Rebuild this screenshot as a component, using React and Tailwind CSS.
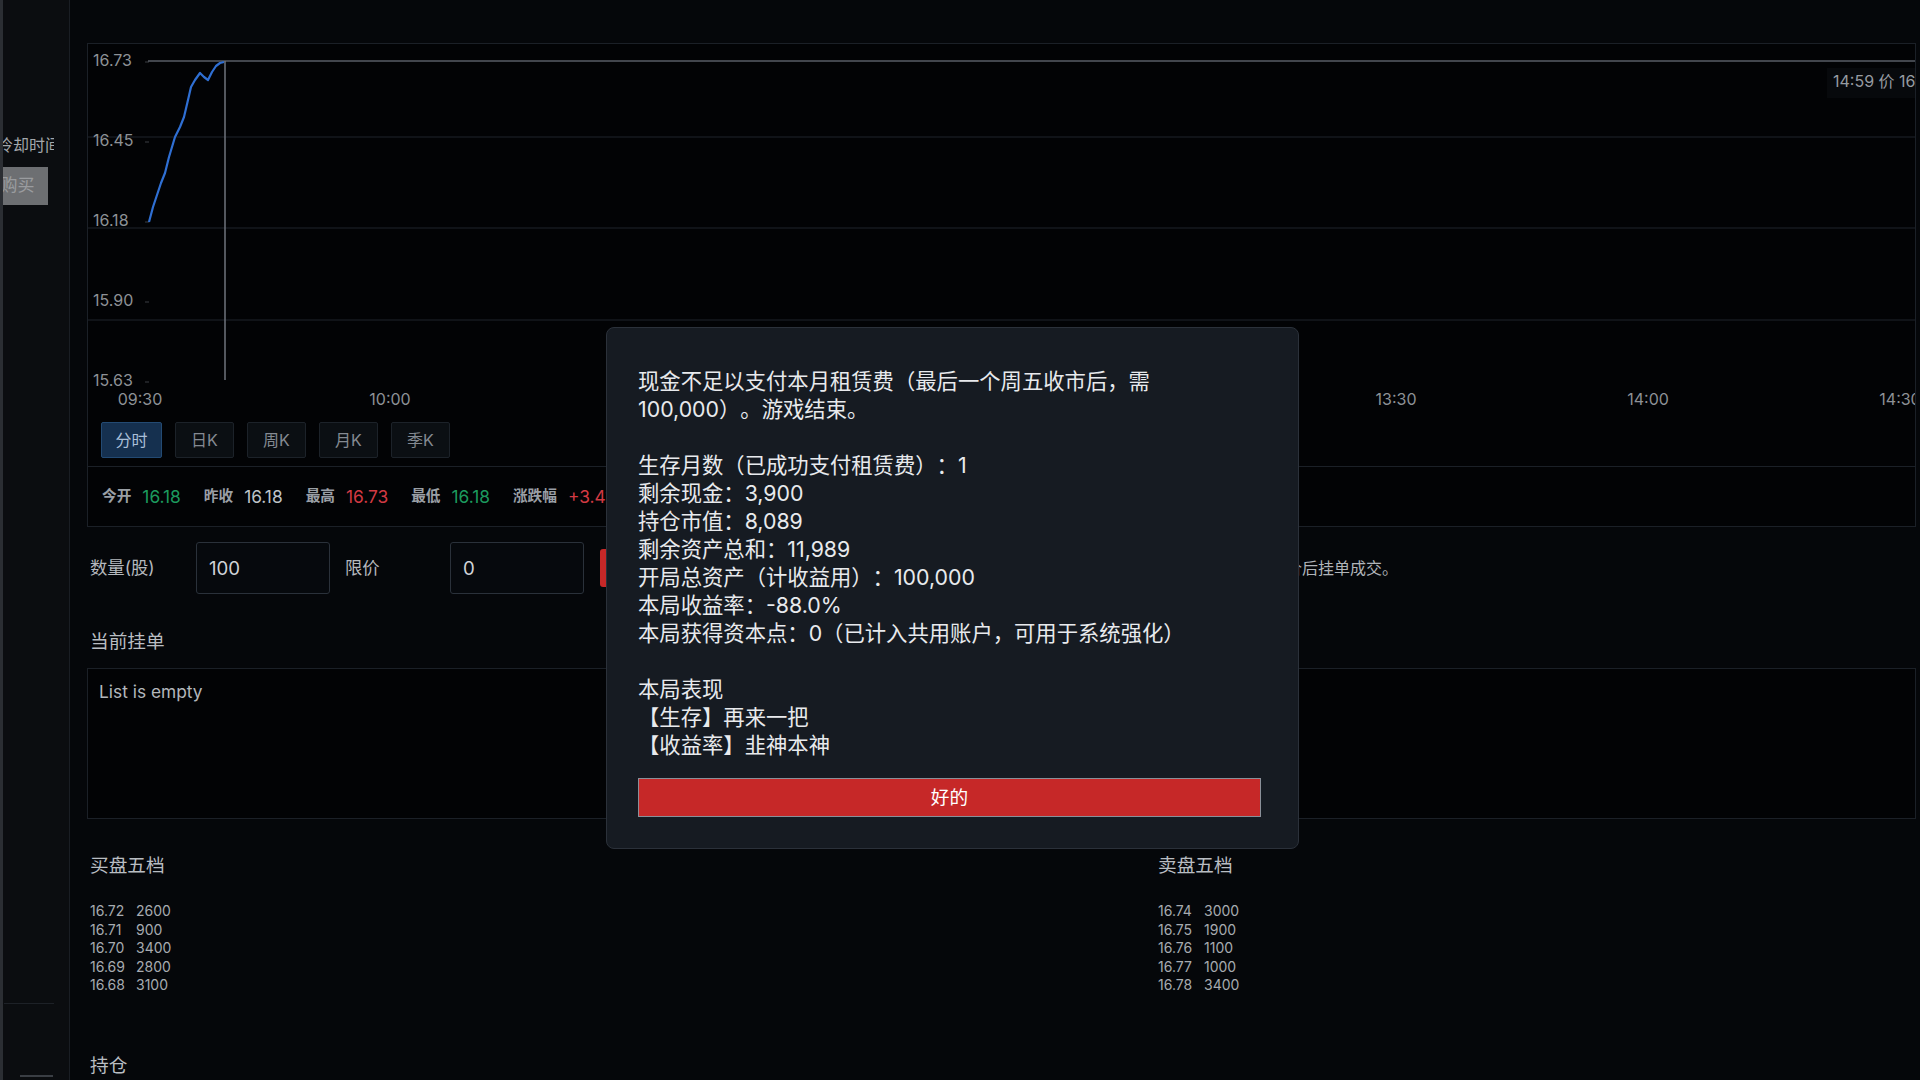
import React from "react";

const font = "font-['Inter','Noto_Sans_CJK_SC',sans-serif]";

const priceLine = [
  [61, 178], [65, 163], [69, 151], [73, 139], [77, 129], [81, 113], [87, 93],
  [92, 83], [96, 73], [100, 56], [103, 43], [107, 36], [112, 29], [116, 33],
  [120, 36], [124, 28], [128, 22], [132, 19], [136, 18],
];

const yLabels = [
  { v: "16.73", y: 18 },
  { v: "16.45", y: 98 },
  { v: "16.18", y: 178 },
  { v: "15.90", y: 258 },
  { v: "15.63", y: 338 },
];

const xLabels = [
  { t: "09:30", x: 52 },
  { t: "10:00", x: 302 },
  { t: "10:30", x: 554 },
  { t: "11:00", x: 806 },
  { t: "11:30/13:00", x: 1058 },
  { t: "13:30", x: 1308 },
  { t: "14:00", x: 1560 },
  { t: "14:30", x: 1812 },
];

const bids = [
  ["16.72", "2600"],
  ["16.71", "900"],
  ["16.70", "3400"],
  ["16.69", "2800"],
  ["16.68", "3100"],
];

const asks = [
  ["16.74", "3000"],
  ["16.75", "1900"],
  ["16.76", "1100"],
  ["16.77", "1000"],
  ["16.78", "3400"],
];

const resultText = `现金不足以支付本月租赁费（最后一个周五收市后，需100,000）。游戏结束。

生存月数（已成功支付租赁费）：1
剩余现金：3,900
持仓市值：8,089
剩余资产总和：11,989
开局总资产（计收益用）：100,000
本局收益率：-88.0%
本局获得资本点：0（已计入共用账户，可用于系统强化）

本局表现
【生存】再来一把
【收益率】韭神本神`;

function IntradayChart() {
  return (
    <svg width="1827" height="372" className="block">
      {[93, 184, 276].map((y) => (
        <line key={y} x1="0" x2="1827" y1={y} y2={y} stroke="#161a1f" strokeWidth="1.5" />
      ))}
      {yLabels.map((l) => (
        <g key={l.v}>
          <text x="5" y={l.y} dominantBaseline="middle" fontSize="16" fill="#8d9196">
            {l.v}
          </text>
          <line x1="57" x2="61" y1={l.y} y2={l.y} stroke="#3a3f45" />
        </g>
      ))}
      <line x1="60" x2="1827" y1="17" y2="17" stroke="#585e66" strokeWidth="1.5" />
      <line x1="137" x2="137" y1="17" y2="336" stroke="#6f757d" strokeWidth="1.5" />
      <polyline
        points={priceLine.map((p) => p.join(",")).join(" ")}
        fill="none"
        stroke="#2f6fd3"
        strokeWidth="2.2"
        strokeLinejoin="round"
      />
      {xLabels.map((l) => (
        <text key={l.t} x={l.x} y="357" textAnchor="middle" dominantBaseline="middle" fontSize="16" fill="#8d9196">
          {l.t}
        </text>
      ))}
      <rect x="1739" y="24" width="100" height="30" fill="#07090c" />
      <text x="1745" y="39" dominantBaseline="middle" fontSize="16" fill="#969ba1">
        14:59 价 16.73
      </text>
    </svg>
  );
}

function Stat({ label, value, tone }) {
  const color =
    tone === "up" ? "text-[#d23a43]" : tone === "down" ? "text-[#1c9a5e]" : "text-[#bfc3c8]";
  return (
    <div className="flex items-center gap-[11px]">
      <span className="text-[14.67px] font-semibold text-[#9a9fa5]">{label}</span>
      <span className={`text-[17.33px] ${color}`}>{value}</span>
    </div>
  );
}

function Book({ title, rows, width }) {
  return (
    <div className={width}>
      <h3 className="text-[18.67px] leading-[26px] text-[#b9bdc2]">{title}</h3>
      <div className="mt-[23px] text-[14px] leading-[18.5px] text-[#a7abb0]">
        {rows.map(([p, q]) => (
          <div key={p} className="flex">
            <span className="w-[46px]">{p}</span>
            <span>{q}</span>
          </div>
        ))}
      </div>
    </div>
  );
}

export default function App() {
  const tabs = ["分时", "日K", "周K", "月K", "季K"];

  return (
    <div className={`relative flex w-[1920px] h-[1080px] overflow-hidden bg-[#05070a] ${font}`}>
      {/* left rail, scrolled off to the left */}
      <aside className="flex w-[70px] shrink-0">
        <div className="w-[3px] bg-[#2b2e33]" />
        <div className="flex w-[67px] flex-col bg-[#0b0d10] border-r border-[#1a1e24]">
          <div className="w-[51px] overflow-hidden pt-[133px]">
            <div className="-ml-[16px] w-[120px]">
              <div className="pl-[10px] text-[16px] leading-[24px] text-[#a3a7ab] whitespace-nowrap">
                冷却时间：0s
              </div>
              <button className="mt-[10px] h-[38px] w-[61px] bg-[#6d6f72] text-[17px] text-[#9a9c9f]">
                购买
              </button>
            </div>
          </div>
          <div className="mt-auto ml-px h-px w-[50px] bg-[#1d2127]" />
          <div className="mt-[71px] mb-[3px] ml-[17px] h-[2px] w-[33px] bg-[#3a3e44]" />
        </div>
      </aside>

      <main className="min-w-0 flex-1 pl-[17px] pt-[43px]">
        <div className="w-[1829px]">
          {/* chart + period tabs + quote row */}
          <section className="border border-[#1b2027] bg-[#020305]">
            <div className="h-[372px] overflow-hidden">
              <IntradayChart />
            </div>
            <div className="flex gap-[13px] pl-[13px] pt-[6px] pb-[8px]">
              {tabs.map((t, i) => (
                <button
                  key={t}
                  className={
                    i === 0
                      ? "h-[36px] w-[61px] rounded-[2px] border border-[#234a73] bg-[#15304f] text-[16px] text-[#a9bfd8]"
                      : "h-[36px] w-[59px] rounded-[2px] border border-[#1c2229] bg-[#0b0f13] text-[16px] text-[#848a92]"
                  }
                >
                  {t}
                </button>
              ))}
            </div>
            <div className="flex h-[60px] items-center gap-[23px] border-t border-[#1b2027] pl-[14px]">
              <Stat label="今开" value="16.18" tone="down" />
              <Stat label="昨收" value="16.18" />
              <Stat label="最高" value="16.73" tone="up" />
              <Stat label="最低" value="16.18" tone="down" />
              <Stat label="涨跌幅" value="+3.41%" tone="up" />
            </div>
          </section>

          {/* order form */}
          <div className="mt-[15px] flex h-[52px] items-center">
            <label className="w-[109px] pl-[3px] text-[17.33px] text-[#b5b9be]">数量(股)</label>
            <input
              defaultValue="100"
              className="h-[52px] w-[134px] rounded-[3px] border border-[#2a313a] bg-[#06090d] pl-[12px] text-[18.67px] text-[#d0d4d8] outline-none"
            />
            <label className="w-[120px] pl-[15px] text-[17.33px] text-[#b5b9be]">限价</label>
            <input
              defaultValue="0"
              className="h-[52px] w-[134px] rounded-[3px] border border-[#2a313a] bg-[#06090d] pl-[12px] text-[18.67px] text-[#d0d4d8] outline-none"
            />
            <button className="ml-[16px] h-[38px] w-[100px] rounded-[3px] bg-[#c62828] text-[16px] text-white">
              买入
            </button>
            <button className="ml-[12px] h-[38px] w-[72px] rounded-[3px] bg-[#2d333b] text-[16px] text-[#c9d1d9]">
              卖出
            </button>
            <p className="ml-[6px] whitespace-nowrap text-[16px] text-[#b0b4b9]">
              提示：限价买入需等待现价不高于限价、限价卖出需等待现价不低于限价后挂单成交。
            </p>
          </div>

          {/* pending orders */}
          <h3 className="mt-[35px] pl-[3px] text-[18.67px] leading-[26px] text-[#b9bdc2]">当前挂单</h3>
          <div className="mt-[13px] h-[151px] border border-[#1b2027] bg-[#020305] pl-[11px] pt-[10px]">
            <p className="text-[17.33px] leading-[26px] text-[#b3b7bc]">List is empty</p>
          </div>

          {/* depth */}
          <div className="mt-[34px] flex pl-[3px]">
            <Book title="买盘五档" rows={bids} width="w-[1068px]" />
            <Book title="卖盘五档" rows={asks} width="flex-1" />
          </div>

          <h3 className="mt-[58px] pl-[3px] text-[18.67px] leading-[26px] text-[#b9bdc2]">持仓</h3>
        </div>
      </main>

      {/* game over dialog */}
      <div className="absolute left-[606px] top-[327px] w-[693px] rounded-lg border border-[#2b313a] bg-[#161b22] pl-[31px] pr-[37px] pt-[39px] pb-[31px]">
        <p className="max-w-[600px] whitespace-pre-line text-[21.33px] leading-[28px] text-[#e8eaed] [text-spacing-trim:space-all]">
          {resultText}
        </p>
        <button className="mt-[19px] h-[39px] w-full border border-[#8a9099] bg-[#c62828] text-[18.67px] text-white">
          好的
        </button>
      </div>
    </div>
  );
}
